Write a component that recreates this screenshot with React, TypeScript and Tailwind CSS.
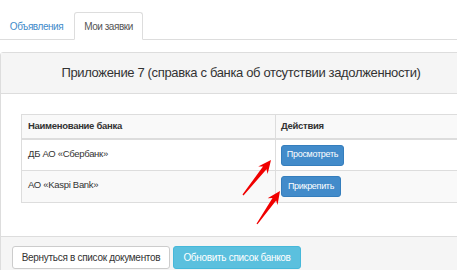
import React from "react";

function arrowPoints(tx: number, ty: number, hx: number, hy: number) {
  const dx = hx - tx;
  const dy = hy - ty;
  const len = Math.hypot(dx, dy);
  const ux = dx / len;
  const uy = dy / len;
  const nx = -uy;
  const ny = ux;
  const headLen = 13;
  const neckW = 2.2;
  const headW = 6;
  const tailW = 0.6;
  const bx = hx - ux * headLen;
  const by = hy - uy * headLen;
  const nbx = hx - ux * (headLen - 3);
  const nby = hy - uy * (headLen - 3);
  const pts = [
    [tx + nx * tailW, ty + ny * tailW],
    [nbx + nx * neckW, nby + ny * neckW],
    [bx + nx * headW, by + ny * headW],
    [hx, hy],
    [bx - nx * headW, by - ny * headW],
    [nbx - nx * neckW, nby - ny * neckW],
    [tx - nx * tailW, ty - ny * tailW],
  ];
  return pts.map((p) => `${p[0].toFixed(1)},${p[1].toFixed(1)}`).join(" ");
}

export default function App() {
  return (
    <div
      className="relative w-[457px] h-[270px] overflow-hidden bg-white text-[#333]"
      style={{ fontFamily: '"Liberation Sans", Arial, sans-serif' }}
    >
      {/* Tabs */}
      <div className="flex items-end h-[40px] border-b border-[#ddd] w-[482px]">
        <div className="h-[27px] w-[73px] mr-[1px] flex items-center justify-center whitespace-nowrap text-[10px] tracking-[-0.45px] text-[#428bca] -mb-px">
          Объявления
        </div>
        <div className="h-[28px] w-[69px] flex items-center justify-center whitespace-nowrap text-[10px] tracking-[-0.45px] text-[#555] bg-white border border-[#ddd] border-b-white rounded-t-[3px] -mb-px">
          Мои заявки
        </div>
      </div>

      {/* Panel */}
      <div className="mt-[12px] w-[482px] border border-[#ddd] rounded-[3px] bg-white">
        <div className="h-[41px] bg-[#f5f5f5] border-b border-[#ddd] flex items-center justify-center whitespace-nowrap text-[13px] tracking-[-0.35px] text-[#333]">
          Приложение 7 (справка с банка об отсутствии задолженности)
        </div>
        <div className="pt-[20px] pl-[20px] pr-[20px] h-[142px]">
          <table className="w-full border-collapse border border-[#ddd] text-[9.5px] tracking-[-0.3px]">
            <thead>
              <tr className="bg-[#f9f9f9] h-[24px]">
                <th className="border border-[#ddd] border-b-2 text-left font-bold px-[6px] w-[254px]">
                  Наименование банка
                </th>
                <th className="border border-[#ddd] border-b-2 text-left font-bold px-[5px]">
                  Действия
                </th>
              </tr>
            </thead>
            <tbody>
              <tr className="bg-white h-[32px]">
                <td className="border border-[#ddd] align-top px-[6px] pt-[7px]">ДБ АО «Сбербанк»</td>
                <td className="border border-[#ddd] align-top px-[5px] pt-[5px]">
                  <div className="inline-flex items-center justify-center whitespace-nowrap h-[21px] w-[63px] rounded-[3px] bg-[#428bca] border border-[#357ebd] text-white text-[9px] tracking-[-0.3px]">
                    Просмотреть
                  </div>
                </td>
              </tr>
              <tr className="bg-[#f9f9f9] h-[32px]">
                <td className="border border-[#ddd] align-top px-[6px] pt-[7px]">АО «Kaspi Bank»</td>
                <td className="border border-[#ddd] align-top px-[5px] pt-[5px]">
                  <div className="inline-flex items-center justify-center whitespace-nowrap h-[21px] w-[60px] rounded-[3px] bg-[#428bca] border border-[#357ebd] text-white text-[9px] tracking-[-0.3px]">
                    Прикрепить
                  </div>
                </td>
              </tr>
            </tbody>
          </table>
        </div>
        <div className="bg-[#f5f5f5] border-t border-[#ddd] h-[40px] pt-[9px] pl-[11px] flex gap-[3px]">
          <div className="h-[23px] w-[158px] flex items-center justify-center whitespace-nowrap rounded-[3px] bg-white border border-[#ccc] text-[10px] tracking-[-0.3px] text-[#333]">
            Вернуться в список документов
          </div>
          <div className="h-[23px] w-[128px] flex items-center justify-center whitespace-nowrap rounded-[3px] bg-[#5bc0de] border border-[#46b8da] text-[10px] tracking-[-0.3px] text-white">
            Обновить список банков
          </div>
        </div>
      </div>

      {/* Red arrows overlay */}
      <svg
        className="absolute left-0 top-0 pointer-events-none"
        width={457}
        height={270}
        viewBox="0 0 457 270"
      >
        <polygon points={arrowPoints(243, 195, 271, 160)} fill="#f00000" />
        <polygon points={arrowPoints(257, 224, 280, 191)} fill="#f00000" />
      </svg>
    </div>
  );
}
